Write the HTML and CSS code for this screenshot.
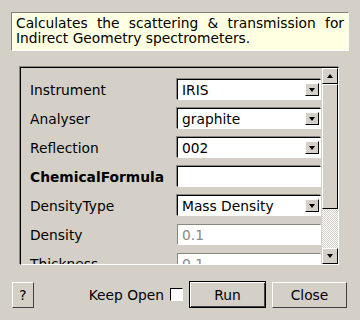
FILE: index.html
```html
<!DOCTYPE html>
<html lang="en">
<head>
  <meta charset="UTF-8" />
  <title>Indirect Calculate Monte Carlo Absorption</title>
  <link rel="stylesheet" href="styles.css">
</head>
<body>
  <div class="dialog">
    <div class="description">Calculates the scattering &amp; transmission for Indirect Geometry spectrometers.</div>

    <!-- Scrollable property list -->
    <div class="frame">
      <div class="viewport">
        <div class="props">
          <div class="row">
            <span class="label">Instrument</span>
            <div class="combo"><span class="value">IRIS</span><span class="arrow-btn"><i class="tri-down"></i></span></div>
          </div>
          <div class="row">
            <span class="label">Analyser</span>
            <div class="combo"><span class="value">graphite</span><span class="arrow-btn"><i class="tri-down"></i></span></div>
          </div>
          <div class="row">
            <span class="label">Reflection</span>
            <div class="combo"><span class="value">002</span><span class="arrow-btn"><i class="tri-down"></i></span></div>
          </div>
          <div class="row">
            <span class="label required">ChemicalFormula</span>
            <div class="edit"></div>
          </div>
          <div class="row">
            <span class="label">DensityType</span>
            <div class="combo"><span class="value">Mass Density</span><span class="arrow-btn"><i class="tri-down"></i></span></div>
          </div>
          <div class="row">
            <span class="label">Density</span>
            <div class="edit disabled">0.1</div>
          </div>
          <div class="row">
            <span class="label">Thickness</span>
            <div class="edit disabled">0.1</div>
          </div>
        </div>
      </div>
      <div class="vscroll">
        <div class="sb-btn"><i class="tri-up"></i></div>
        <div class="sb-slider"></div>
        <div class="sb-trough"></div>
        <div class="sb-btn"><i class="tri-down"></i></div>
      </div>
    </div>

    <div class="buttons">
      <button class="btn help">?</button>
      <span class="spacer"></span>
      <label class="keep-open">Keep Open <span class="check"></span></label>
      <button class="btn default">Run</button>
      <button class="btn close">Close</button>
    </div>
  </div>
</body>
</html>
```

FILE: styles.css
```css
body {
  margin: 0;
  background: #d4d0c8;
  font-family: "DejaVu Sans", sans-serif;
  font-size: 13.8px;
  color: #000;
}
.dialog {
  width: 360px;
  height: 320px;
  padding: 12px 11px 0 11px;
  box-sizing: border-box;
}
.description {
  height: 39px;
  box-sizing: border-box;
  padding: 3px 4px 0 4px;
  line-height: 15px;
  text-align: justify;
  background: #ffffe1;
  border: 1px solid;
  border-color: #808080 #ffffff #ffffff #808080;
}
.frame {
  display: flex;
  margin: 16px 0 0 9px;
  width: 319px;
  height: 198px;
  box-sizing: border-box;
  border: 1px solid;
  border-color: #000 #fff #fff #000;
  box-shadow: -1px -1px 0 #8a8680;
}
.viewport {
  flex: 1;
  overflow: hidden;
}
.props {
  padding: 11px 0 0 9px;
  display: flex;
  flex-direction: column;
  gap: 8px;
}
.row {
  display: flex;
  align-items: center;
  height: 21px;
}
.label {
  width: 147px;
  flex: none;
}
.required {
  font-weight: bold;
}
.combo, .edit {
  width: 144px;
  height: 21px;
  box-sizing: border-box;
  display: flex;
  align-items: center;
  background: #fff;
  border: 1px solid;
  border-color: #000 #fff #fff #000;
  box-shadow: -1px -1px 0 #8a8680;
}
.value, .edit {
  padding-left: 4px;
}
.value {
  flex: 1;
}
.edit.disabled {
  color: #8a8a8a;
  border-color: #8a8680 #fff #fff #8a8680;
  box-shadow: none;
}
.arrow-btn {
  width: 14px;
  height: 13px;
  margin-right: 1px;
  box-sizing: border-box;
  display: flex;
  align-items: center;
  justify-content: center;
  background: #d4d0c8;
  border: 1px solid;
  border-color: #fff #000 #000 #fff;
}
.tri-down {
  width: 0;
  height: 0;
  border-left: 3px solid transparent;
  border-right: 3px solid transparent;
  border-top: 4px solid #000;
}
.tri-up {
  width: 0;
  height: 0;
  border-left: 3px solid transparent;
  border-right: 3px solid transparent;
  border-bottom: 4px solid #000;
}
.vscroll {
  width: 16px;
  display: flex;
  flex-direction: column;
}
.sb-btn {
  height: 16px;
  box-sizing: border-box;
  display: flex;
  align-items: center;
  justify-content: center;
  background: #d4d0c8;
  border: 1px solid;
  border-color: #fff #000 #000 #fff;
}
.sb-slider {
  height: 125px;
  box-sizing: border-box;
  background: #d4d0c8;
  border: 1px solid;
  border-color: #fff #000 #000 #fff;
}
.sb-trough {
  flex: 1;
  background-image: repeating-conic-gradient(#d4d0c8 0 25%, #ffffff 0 50%);
  background-size: 2px 2px;
}
.buttons {
  display: flex;
  align-items: center;
  margin-top: 16px;
  padding: 0 2px 0 1px;
  height: 27px;
}
.btn {
  font-family: "DejaVu Sans", sans-serif;
  font-size: 13.8px;
  color: #000;
  background: #d4d0c8;
  border: 1px solid;
  border-color: #fff #404040 #404040 #fff;
  padding: 0;
  height: 26px;
}
.help {
  width: 22px;
}
.spacer {
  flex: 1;
}
.keep-open {
  display: flex;
  align-items: center;
  gap: 6px;
  margin-right: 6px;
}
.check {
  width: 13px;
  height: 13px;
  box-sizing: border-box;
  background: #fff;
  border: 1px solid;
  border-color: #000 #fff #fff #000;
}
.default {
  width: 77px;
  height: 27px;
  border: 1px solid #000;
  box-shadow: inset 1px 1px 0 #fff, inset -1px -1px 0 #404040;
  margin-right: 6px;
}
.close {
  width: 75px;
}
```
